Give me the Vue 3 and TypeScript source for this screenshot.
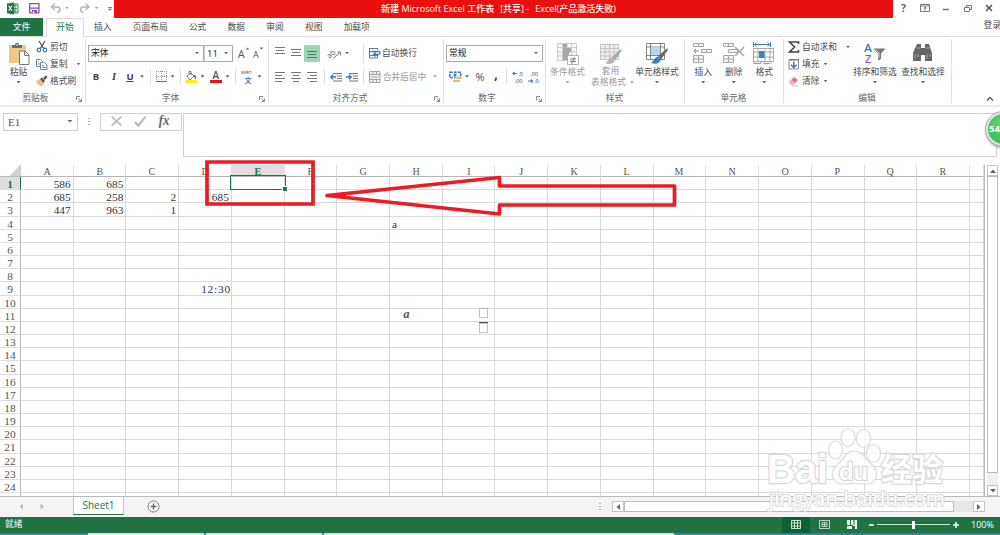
<script setup lang="ts">
const columns: string[] = 'ABCDEFGHIJKLMNOPQR'.split('')
const rows: number[] = Array.from({ length: 25 }, (_, i) => i + 1)

const cells: Record<string, string> = {
  A1: '586', B1: '685',
  A2: '685', B2: '258', C2: '2', D2: '685',
  A3: '447', B3: '963', C3: '1',
  H4: 'a',
  D9: '12:30',
}
const tabs: string[] = ['插入', '页面布局', '公式', '数据', '审阅', '视图', '加载项']
</script>

<template>
  <div class="excel">
    <header class="title">
      <div class="quick">
        <svg width="114" height="18" viewBox="0 0 114 18">
          <path d="M11 4h7v9h-7z" fill="#fff" stroke="#217346" stroke-width=".9" />
          <path d="M13 6h4M13 8.500h4M13 11h4M15 4v9" stroke="#217346" stroke-width=".8" />
          <path d="M7 3.500 14 2.500v12L7 13.300z" fill="#217346" />
          <path d="m8.700 5.800 3.300 5M12 5.800l-3.300 5" stroke="#fff" stroke-width="1.100" />
          <path d="M29.700 3.700h9.200v9.200h-9.200z" fill="#fff" stroke="#8655a8" stroke-width="1.300" />
          <path d="M30 7.500h9v1.300h-9zM32 10h5v3h-5z" fill="#8655a8" />
          <path d="M33 11h1.200v2H33z" fill="#fff" />
          <g fill="none" stroke="#b5b8bd" stroke-width="1.500">
            <path d="M55 3.500 51.500 7 55 10M52 7h5c4 0 4 5 0 5.500" />
            <path d="M85.500 3.500 89 7l-3.500 3M88.500 7h-5c-4 0-4 5 0 5.500" />
          </g>
          <path d="M65 7h4l-2 2zM94.500 7h4l-2 2z" fill="#aaa" />
          <path d="M108 7h4v.8h-4zM108 8.800h4l-2 2z" fill="#666" />
        </svg>
      </div>
      <div class="caption"><span>新建 Microsoft Excel 工作表</span><span>[共享] -</span><span>Excel(产品激活失败)</span></div>
      <svg class="window" width="107" height="18" viewBox="0 0 107 18">
        <text x="8" y="12" font-size="10.500" font-weight="700" fill="#666">?</text>
        <g fill="none" stroke="#777" stroke-width="1">
          <path d="M27.500 4.500h9v7h-9zM27.500 6h9M32 10.500V7M30.500 8.500 32 7l1.500 1.500" />
          <path d="M50 9.500h6" stroke-width="1.500" />
          <path d="M71.500 7.500h5v4h-5zM73.500 7.500v-2h5v4h-2" />
          <path d="m93 5 6 6M99 5l-6 6" stroke="#555" stroke-width="1.500" />
        </g>
      </svg>
    </header>

    <nav class="tabs">
      <span class="file">文件</span>
      <span class="active">开始</span>
      <span v-for="t in tabs" :key="t" class="tab">{{ t }}</span>
      <span class="login">登录</span>
    </nav>

    <section class="ribbon">
      <!-- Clipboard -->
      <div class="group clip">
        <div class="body">
          <div class="big">
            <svg width="22" height="24" viewBox="0 0 22 24">
              <path d="M1 3h17v18H1z" fill="#efc983" />
              <path d="M4 6V3h3c0-3 4-3 4 0h3v3z" fill="#6a6a6a" />
              <path d="M8.300 2.300h1.500v1.200H8.300z" fill="#fff" />
              <path d="M11.500 9h5.500l4 4v9.500h-9.500z" fill="#fff" stroke="#777" />
              <path d="M16.500 9v4.500H21" fill="none" stroke="#777" />
            </svg>
            <span>粘贴</span><i class="arr"></i>
          </div>
          <div class="smalls">
            <div class="small">
              <svg width="12" height="12" viewBox="0 0 12 12">
                <path d="m3 0 5 8M9 0 4 8" stroke="#555" stroke-width="1.300" />
                <g fill="none" stroke="#3b79b8" stroke-width="1.200"><circle cx="3" cy="9" r="1.800" /><circle cx="9" cy="9" r="1.800" /></g>
              </svg>剪切
            </div>
            <div class="small">
              <svg width="12" height="12" viewBox="0 0 12 12">
                <g fill="#fff" stroke="#6b87a8"><path d="M.5 1.500h4l2 2v5h-6z" /><path d="M4.500 4.500h4l2.500 2.500v4.500H4.500z" /></g>
                <path d="M6 7.500h2M6 9.500h4M2 4h1M2 6h2" stroke="#3b79b8" stroke-width=".8" />
              </svg>复制<i class="arr after"></i>
            </div>
            <div class="small">
              <svg width="12" height="12" viewBox="0 0 12 12">
                <path d="m0 6 4-2 4 4-2 3.500c-3-.5-5-2.500-6-5.500z" fill="#efc183" />
                <path d="m4 4 2-1.500L9 6 7.500 8zM7 3l3-2.500 1.500 1.300L9 5z" fill="#555" />
              </svg>格式刷
            </div>
          </div>
        </div>
        <div class="foot">剪贴板</div>
        <svg class="launch" viewBox="0 0 6 6"><path d="M.5 4V.5H4M2.500 2.500 5 5M5.500 2.500v3h-3" /></svg>
      </div>

      <!-- Font -->
      <div class="group font">
        <div class="body rows">
          <div class="row font1">
            <div class="combo">宋体<i class="arr"></i></div>
            <div class="combo size">11<i class="arr"></i></div>
            <svg width="12" height="14" viewBox="0 0 12 14"><text x="0" y="12" font-size="10.500" fill="#555">A</text><path d="m7.500 3.500 2-2 2 2z" fill="#3b79b8" /></svg>
            <svg width="12" height="14" viewBox="0 0 12 14"><text x="0" y="12" font-size="9" fill="#555">A</text><path d="m6.500 1.500 2 2 2-2z" fill="#3b79b8" /></svg>
          </div>
          <div class="row font2">
            <b>B</b><b class="it">I</b><b class="un">U</b><i class="arr"></i><i class="bar"></i>
            <svg width="11" height="11" viewBox="0 0 11 11"><path d="M.5 0v10M5.500 0v10M10.500 0v10M0 .5h11M0 5.500h11" fill="none" stroke="#999" stroke-dasharray="1 1" /><path d="M0 10.500h11" stroke="#666" /></svg>
            <i class="arr"></i><i class="bar"></i>
            <svg width="12" height="12" viewBox="0 0 12 12"><path d="m2 5 4-3 3 3-4 4zM4 3V.5h2V4" fill="#fff" stroke="#777" /><path d="M9 4c2 0 3 2 1.500 4L9 6z" fill="#3b79b8" /><path d="M0 9h12v3H0z" fill="#fff200" /></svg>
            <i class="arr"></i>
            <svg width="12" height="12" viewBox="0 0 12 12"><text x="2.500" y="8.300" font-size="10" font-weight="600" fill="#555">A</text><path d="M0 9h12v3H0z" fill="#f01010" /></svg>
            <i class="arr"></i><i class="bar"></i>
            <svg width="13" height="13" viewBox="0 0 13 13"><text x="0" y="4" font-size="5.500" fill="#555">wén</text><text x="3.500" y="12.500" font-size="7" font-weight="700" fill="#3b79b8">文</text></svg>
            <i class="arr"></i>
          </div>
        </div>
        <div class="foot">字体</div>
        <svg class="launch" viewBox="0 0 6 6"><path d="M.5 4V.5H4M2.500 2.500 5 5M5.500 2.500v3h-3" /></svg>
      </div>

      <!-- Alignment -->
      <div class="group align">
        <div class="body rows">
          <div class="row align1">
            <svg width="10" height="10" viewBox="0 0 10 10"><path d="M0-.5h10M1 2.500h8M0 5.500h10" stroke="#777" /></svg>
            <svg width="10" height="10" viewBox="0 0 10 10"><path d="M0 1.500h10M1 4.500h8M0 7.500h10" stroke="#777" /></svg>
            <span class="on"><svg width="10" height="10" viewBox="0 0 10 10"><path d="M0 3.500h10M1 6.500h8M0 9.500h10" stroke="#567a67" /></svg></span>
            <svg class="turn" width="12" height="12" viewBox="0 0 12 12"><text x="-2" y="9" font-size="7.500" fill="#555" transform="rotate(-42 3 7)">ab</text><path d="m4 11.500 7-6M11.500 8V5H8.500" fill="none" stroke="#777" /></svg>
            <i class="arr"></i><i class="bar wrapbar"></i>
            <svg width="12" height="12" viewBox="0 0 12 12"><path d="M.5 1.500h8M.5 4.500h5M.5 8.500h8M.5 11h8M.5 1v10M8.500 1v2M8.500 8v3" stroke="#777" /><path d="M3 4.500h7c1.500 0 1.500 3-1 3H5M6.500 5.500 4.500 7.500l2 2" fill="none" stroke="#3b79b8" stroke-width="1.300" /></svg>
            <span>自动换行</span>
          </div>
          <div class="row align2">
            <svg width="10" height="10" viewBox="0 0 10 10"><path d="M0 .5h10M0 3.500h7M0 6.500h10M0 9.500h7" stroke="#777" /></svg>
            <svg width="10" height="10" viewBox="0 0 10 10"><path d="M0 .5h10M2 3.500h6M0 6.500h10M2 9.500h6" stroke="#777" /></svg>
            <svg width="10" height="10" viewBox="0 0 10 10"><path d="M0 .5h10M3 3.500h7M0 6.500h10M3 9.500h7" stroke="#777" /></svg>
            <i class="bar"></i>
            <svg width="12" height="10" viewBox="0 0 12 10"><path d="M3 1.500h9M7 4h5M7 6.500h5M3 9h9" stroke="#777" /><path d="M6 5H1M3 2.800.8 5 3 7.200" fill="none" stroke="#3b79b8" stroke-width="1.400" /></svg>
            <svg width="12" height="10" viewBox="0 0 12 10"><path d="M3 1.500h9M7 4h5M7 6.500h5M3 9h9" stroke="#777" /><path d="M0 5h5M3 2.800 5.200 5 3 7.200" fill="none" stroke="#3b79b8" stroke-width="1.400" /></svg>
            <i class="bar"></i>
            <svg width="12" height="12" viewBox="0 0 12 12"><path d="M.5.500h10.500v11H.5zM.5 3.500H11M.5 8.500H11M4 .5v3M7.500.5v3M4 8.500v3M7.500 8.500v3M2 6h7.500" fill="#f4eff4" stroke="#a9a3aa" /></svg>
            <span class="dim">合并后居中</span><i class="arr pale"></i>
          </div>
        </div>
        <div class="foot">对齐方式</div>
        <svg class="launch" viewBox="0 0 6 6"><path d="M.5 4V.5H4M2.500 2.500 5 5M5.500 2.500v3h-3" /></svg>
      </div>

      <!-- Number -->
      <div class="group number">
        <div class="body rows">
          <div class="row"><div class="combo wide">常规<i class="arr"></i></div></div>
          <div class="row num2">
            <svg width="13" height="12" viewBox="0 0 13 12"><path d="M.8 1.300h11v5.200h-11z" fill="#fff" stroke="#3b79b8" stroke-width="1.500" stroke-dasharray="3 1" /><circle cx="6" cy="4" r="1.500" fill="#3b79b8" /><path d="M6 6h6v2H6zM4 9h7v2H4z" fill="#e9bd75" /></svg>
            <i class="arr"></i><b class="pct">%</b><b class="comma">,</b><i class="bar"></i>
            <svg width="13" height="12" viewBox="0 0 13 12"><text x="6" y="4.500" font-size="5.800" fill="#444">.0</text><text x="2.500" y="12" font-size="5.800" fill="#444">.00</text><path d="M5 2.500H1M2.500 1 1 2.500 2.500 4" fill="none" stroke="#3b79b8" stroke-width="1.200" /></svg>
            <svg width="13" height="12" viewBox="0 0 13 12"><text x="2" y="4.500" font-size="5.800" fill="#444">.00</text><text x="6" y="12" font-size="5.800" fill="#444">.0</text><path d="M0 10h4.500M3 8.500 4.500 10 3 11.500" fill="none" stroke="#3b79b8" stroke-width="1.200" /></svg>
          </div>
        </div>
        <div class="foot">数字</div>
        <svg class="launch" viewBox="0 0 6 6"><path d="M.5 4V.5H4M2.500 2.500 5 5M5.500 2.500v3h-3" /></svg>
      </div>

      <!-- Styles -->
      <div class="group styles">
        <div class="body">
          <div class="big dim">
            <svg width="22" height="24" viewBox="0 0 22 24">
              <path d="M.5 1.500h19v17H.5zM.5 5.500h19M.5 10h19M.5 14h19M5.500 1.500v17M10 1.500v17M14.500 1.500v17" fill="#faf7fa" stroke="#d0c9d0" />
              <path d="M6 2h4v3.500H6zM6 6h8v4H6zM6 10h6v4H6zM6 14h4v4H6z" fill="#aaa5aa" />
              <path d="M10.500 13.500h11v9h-11z" fill="#fff" stroke="#b5afb5" /><path d="M13 17h6M13 19.500h6M17.500 15l-3 6.500" stroke="#777" />
            </svg><span>条件格式</span><i class="arr pale"></i>
          </div>
          <div class="big dim two">
            <svg width="22" height="24" viewBox="0 0 22 24">
              <path d="M.5 2.500h18v15H.5zM.5 6.500h18M.5 10h18M.5 14h18M5 2.500v15M9.500 2.500v15M14 2.500v15" fill="#f0ecf0" stroke="#c8c2c8" />
              <path d="M21.500 6.500 12 15l3 3 6.500-9z" fill="#aaa" /><path d="M12 15c-3 0-3 4-7 6 4 2 9 1 10-3z" fill="#b8b4b8" />
            </svg><span>套用</span><span>表格格式<i class="arr pale"></i></span>
          </div>
          <div class="big">
            <svg width="22" height="24" viewBox="0 0 22 24">
              <path d="M.5 1.500h18v16H.5zM.5 5h18M.5 13.500h18M4.500 1.500v16M14.500 1.500v16" fill="#fff" stroke="#777" stroke-width=".9" />
              <path d="M5 5.500h9v7.500H5z" fill="#b8d5ef" />
              <path d="M21.500 6 12 14l3 3.500 6.500-9z" fill="#666" /><path d="M12 14.500c-3 0-3 4-7 6 4 2.500 9 1 10-3z" fill="#3b7fc0" />
            </svg><span>单元格样式</span><i class="arr"></i>
          </div>
        </div>
        <div class="foot">样式</div>
      </div>

      <!-- Cells -->
      <div class="group cellsg">
        <div class="body">
          <div class="big">
            <svg width="22" height="24" viewBox="0 0 22 24">
              <path d="M1.500 1.500h10v3h-10zM6.500 1.500v3M1.500 13.500h10v7h-10zM6.500 13.500v7M1.500 17h10M9.500 7.500h10v3h-10zM14.500 7.500v3" fill="#f5f1f5" stroke="#aaa5aa" />
              <path d="M7 9H2M4 7 2 9l2 2" fill="none" stroke="#888" />
            </svg><span>插入</span><i class="arr"></i>
          </div>
          <div class="big">
            <svg width="22" height="24" viewBox="0 0 22 24">
              <path d="M.5 1.500h10v3H.5zM5.500 1.500v3M.5 13.500h10v7H.5zM5.500 13.500v7M.5 17h10M5.500 7.500h9v3h-9z" fill="#f5f1f5" stroke="#aaa5aa" />
              <path d="m12 5 9 9M21 5l-9 9" stroke="#aaa" stroke-width="1.700" />
            </svg><span>删除</span><i class="arr"></i>
          </div>
          <div class="big">
            <svg width="22" height="24" viewBox="0 0 22 24">
              <path d="M1 2.500h16M3.500.800 1.500 2.500l2 1.700M14.500.8l2 1.700-2 1.700M.5 0v5M17.500 0v5" fill="none" stroke="#3b79b8" />
              <path d="M.5 6.500h20v13H.5zM.5 10h20M.5 15h20M5 6.500v13M12 6.500v13M17 6.500v13" fill="#fff" stroke="#aaa" />
              <path d="M6 9h5.500v7H6z" fill="#3b7fc0" /><path d="M1 19.500v2h7v-2M11 19.500v2h6l2-2" fill="none" stroke="#999" />
            </svg><span>格式</span><i class="arr"></i>
          </div>
        </div>
        <div class="foot">单元格</div>
      </div>

      <!-- Editing -->
      <div class="group edit">
        <div class="body">
          <div class="smalls">
            <div class="small">
              <svg width="12" height="12" viewBox="0 0 12 12"><path d="M10.500 3V1H1.500L6.500 6l-5 5h9V9" fill="none" stroke="#444" stroke-width="1.600" /></svg>自动求和<i class="arr after"></i>
            </div>
            <div class="small">
              <svg width="12" height="12" viewBox="0 0 12 12"><path d="M1 1.500h9.500v9.500H1z" fill="#fff" stroke="#888" /><path d="M1 1h9.500v1.500H1z" fill="#777" /><path d="M5.800 3.500v6M3 6.700l2.800 2.800 2.800-2.800" fill="none" stroke="#3b79b8" stroke-width="1.500" /></svg>填充<i class="arr near"></i>
            </div>
            <div class="small">
              <svg width="12" height="12" viewBox="0 0 12 12"><path d="m1 7 5-5 4 3-5 5H3z" fill="#e8748a" /><path d="m1 7 2-2 4 3-2 2H3z" fill="#f4b6c0" /><path d="M4 11h6" stroke="#bbb" /></svg>清除<i class="arr near"></i>
            </div>
          </div>
          <div class="big">
            <svg width="22" height="24" viewBox="0 0 22 24">
              <text x="0" y="10" font-size="11" font-weight="600" fill="#3b79b8" textLength="8" lengthAdjust="spacingAndGlyphs">A</text>
              <text x="1" y="20.500" font-size="11" font-weight="600" fill="#8e5bb5">Z</text>
              <path d="M9.500 6.500h12l-4.500 5V17l-3 1.500v-7z" fill="#777" /><path d="m12 7.500 3 3.500v5" fill="none" stroke="#ddd" />
            </svg><span>排序和筛选</span><i class="arr"></i>
          </div>
          <div class="big">
            <svg width="22" height="24" viewBox="0 0 22 24">
              <path d="M5 2h4v4h4V2h4l3 9v8h-7v-6H9v6H1v-8z" fill="#666" /><path d="M4.500 6h4M13.500 6h4M3 12v5M15 12v5M6 12v3M18 12v3" stroke="#bbb" stroke-width=".8" />
            </svg><span>查找和选择</span><i class="arr"></i>
          </div>
        </div>
        <div class="foot">编辑</div>
      </div>
      <svg class="collapse" width="8" height="6" viewBox="0 0 8 6"><path d="m1 4.500 3-3 3 3" fill="none" stroke="#555" stroke-width="1.300" /></svg>
    </section>

    <section class="formula">
      <div class="name">E1<i class="arr"></i></div>
      <i class="dots"></i>
      <svg class="fx" width="82" height="18" viewBox="0 0 82 18">
        <path d="m8 3 11 10M19 3 8 13" stroke="#b9b9b9" stroke-width="1.800" />
        <path d="m34 9 4 4 8-10" fill="none" stroke="#bdbdbd" stroke-width="2.500" />
        <text x="61" y="12.500" font-size="17" font-family="Liberation Serif, serif" font-style="italic" font-weight="700" fill="#666" textLength="12" lengthAdjust="spacingAndGlyphs">fx</text>
      </svg>
      <div class="input"></div>
    </section>

    <main class="sheet">
      <div class="grid">
        <div class="corner"></div>
        <div v-for="c in columns" :key="c" class="ch" :class="{ sel: c === 'E' }"><span>{{ c }}</span></div>
        <div class="ch"></div>
        <template v-for="r in rows" :key="r">
          <div class="rh" :class="{ sel: r === 1 }">{{ r < 25 ? r : '' }}</div>
          <div v-for="c in columns" :key="c + r" class="cell" :class="{ left: c === 'H', time: r === 9 }">
            {{ cells[c + r] }}<i v-if="c === 'E' && r === 1" class="cursor"></i>
          </div>
          <div class="cell"></div>
        </template>
      </div>
      <div class="vscroll">
        <span class="btn"><svg width="6" height="4" viewBox="0 0 6 4"><path d="m0 4 3-3.500L6 4z" /></svg></span>
        <span class="thumb"></span>
        <span class="btn"><svg width="6" height="4" viewBox="0 0 6 4"><path d="m0 0 3 3.500L6 0z" /></svg></span>
      </div>
    </main>

    <section class="sheets">
      <svg class="navs" width="73" height="20" viewBox="0 0 73 20"><path d="m23 6.500-3.500 3 3.500 3zM40.500 6.500l3.500 3-3.500 3z" fill="#bbb" /></svg>
      <span class="sheettab">Sheet1</span>
      <svg class="add" width="13" height="13" viewBox="0 0 13 13"><circle cx="6.500" cy="6.500" r="5.500" fill="#fff" stroke="#777" /><path d="M6.500 3.500v6M3.500 6.500h6" stroke="#666" stroke-width="1.400" /></svg>
      <i class="dots"></i>
      <div class="hscroll">
        <span class="btn"><svg width="4" height="6" viewBox="0 0 4 6"><path d="M4 0 .5 3 4 6z" /></svg></span>
        <span class="thumb"></span>
        <span class="btn"><svg width="4" height="6" viewBox="0 0 4 6"><path d="m0 0 3.500 3L0 6z" /></svg></span>
      </div>
    </section>

    <footer class="status">
      <span class="ready">就绪</span>
      <svg class="views" width="188" height="16" viewBox="0 0 188 16">
        <path d="M0 0h28v16H0z" fill="#0a6332" />
        <path d="M9.500 3.500h9v8h-9zM9.500 6h9M9.500 9h9M12.500 3.500v8M15.500 3.500v8" fill="none" stroke="#dcefe3" stroke-width=".9" />
        <path d="M37.500 3.500h10v8h-10zM40 5.500h5v4h-5zM40 7.500h5M42.500 5.500v4" fill="none" stroke="#b8d6c4" />
        <path d="M65 3h10v9H65z" fill="#e4f1e9" /><path d="M68.500 3v5M72 3v5M65 8.500h6" stroke="#217346" /><path d="M70 9h3v3h-3z" fill="#217346" />
        <path d="M87 8h5M171 8h6M174 5v6" stroke="#fff" stroke-width="1.500" />
        <path d="M95 7.500h73" stroke="#c9e0d2" stroke-width="1" /><path d="M130 4h3v8h-3z" fill="#fff" />
      </svg>
      <span class="zoom">100%</span>
    </footer>
    <div class="taskbar"><i></i><i></i><i></i></div>

    <!-- Drawn shapes and text boxes floating over the sheet -->
    <svg class="overlay" width="1000" height="535" viewBox="0 0 1000 535">
      <text x="403.500" y="318" font-size="12" font-family="Liberation Serif, serif" font-style="italic" font-weight="700" fill="#555">a</text>
      <g fill="#fff" stroke="#777" stroke-width=".9" stroke-dasharray="1 1">
        <path d="M479.500 308.500h8v9h-8zM479.500 323.500h8v9h-8z" />
      </g>
      <path d="M479 322.500h9" stroke="#555" />
      <g fill="none" stroke="#ed1c24" stroke-width="3.700">
        <path d="M207 162h106v42H207z" />
        <path d="M327 195.500 499.500 177.500V186h175v19h-175v9z" stroke-linejoin="round" />
        <path d="m327 195.500 18-2.500v5z" fill="#ed1c24" stroke-width="1.500" />
      </g>
      <g class="mark">
        <ellipse cx="835.500" cy="450" rx="7" ry="9" /><ellipse cx="848" cy="437.500" rx="7" ry="9" /><ellipse cx="863.500" cy="438.500" rx="7" ry="9" /><ellipse cx="873.500" cy="453.500" rx="7" ry="9" />
        <path d="M854 451c-8 0-10 8-16 13-10 8-6 21 6 20 7-1 13-1 20 0 13 1 17-12 7-20-6-5-9-13-17-13z" />
        <text x="767" y="483" font-size="40" font-weight="700" textLength="61" lengthAdjust="spacingAndGlyphs">Bai</text>
        <text x="839" y="480" font-size="24" font-weight="700" textLength="29" lengthAdjust="spacingAndGlyphs">du</text>
        <text x="881" y="481" font-size="32" font-weight="700" textLength="62" lengthAdjust="spacingAndGlyphs">经验</text>
        <text class="url" x="769" y="506" font-size="20" textLength="176" lengthAdjust="spacingAndGlyphs">jingyan.baidu.com</text>
      </g>
    </svg>
    <div class="badge">54</div>
  </div>
</template>

<style>
body { overflow: hidden; }
</style>

<style scoped>
.excel {
  position: relative; width: 1000px; height: 535px; overflow: hidden; background: #fff;
  display: flex; flex-direction: column; color: #4a4a4a; font-style: normal; white-space: nowrap;
  font-family: "Open Sans", "Noto Sans CJK SC", sans-serif; font-size: 8.75px; line-height: 12px;
}
.excel * { box-sizing: border-box; }
svg { display: block; flex: none; overflow: visible; }
i { font-style: normal; }
.arr { display: block; width: 4px; height: 2.5px; background: #666; clip-path: polygon(0 0, 100% 0, 50% 100%); }
.arr.pale { background: #aaa; }

.title { display: grid; grid-template-columns: 114px 779px 107px; height: 18px; }
.caption {
  background: #ea1010; color: #fff; display: flex; justify-content: center; gap: 6px;
  padding-right: 10px; line-height: 17px; font-weight: 500; font-size: 9px;
}

.tabs { display: flex; height: 19px; border-bottom: 1px solid #ddd; line-height: 18px; position: relative; }
.file { width: 43px; background: #217346; color: #fff; text-align: center; }
.active {
  width: 38px; height: 19px; margin: 0 10px 0 3px; text-align: center; color: #217346;
  border: 1px solid #ddd; border-bottom: 0; background: #fff; line-height: 17px;
}
.tab { margin-right: 21.2px; }
.login { margin-left: auto; margin-right: -1px; line-height: 14px; }

.ribbon { display: flex; height: 70px; padding-top: 2px; border-bottom: 2px solid #ececec; position: relative; }
.group { position: relative; height: 64px; border-right: 1px solid #e0e0e0; }
.clip { width: 86px; } .font { width: 183px; } .align { width: 175px; } .number { width: 102px; }
.styles { width: 139px; } .cellsg { width: 99px; } .edit { width: 168px; }
.body { display: flex; height: 53px; }
.foot { text-align: center; line-height: 12px; color: #666; padding-right: 14px; }
.font .foot { padding-right: 13px; } .align .foot { padding-right: 12px; } .number .foot { padding-right: 15px; }
.styles .foot { padding-right: 1px; } .cellsg .foot { padding-right: 1px; } .edit .foot { padding-right: 1px; }
.launch { position: absolute; right: 3px; bottom: 1px; width: 6px; height: 6px; fill: none; stroke: #777; stroke-width: .9; }
.big { display: flex; flex-direction: column; align-items: center; padding-top: 3px; flex: none; }
.big span { line-height: 12px; }
.big .arr { margin-top: 3px; }
.clip .big { width: 37px; }
.dim { color: #999; }
.two span { line-height: 11px; display: flex; align-items: center; }
.two span:last-child { padding-left: 4px; }
.two .arr { margin: 0 0 0 4px; }
.smalls { display: flex; flex-direction: column; margin-top: -.5px; }
.small { display: flex; align-items: center; height: 17px; gap: 2px; }
.clip .small svg { margin-left: -1px; }
.after { margin-left: 7px; } .near { margin-left: 2px; }
.rows { flex-direction: column; }
.row { display: grid; align-items: center; height: 23px; justify-items: center; }
.rows .row:first-child { height: 26px; padding-top: 2px; }
.bar { width: 1px; height: 15px; background: #ddd; }
.combo {
  width: 100%; height: 17px; border: 1px solid #ababab; display: flex; align-items: center;
  justify-content: space-between; padding: 0 4px 0 2px; color: #222; line-height: 15px; justify-self: start;
}
.size { border-left-color: #ccc; font-size: 9.5px; }
.font1 { grid-template-columns: 116px 29px 3px 15px 16px; padding-left: 2px; }
.font1 svg:nth-of-type(1) { grid-column: 4; }
.font2 { grid-template-columns: 20px 16px 16px 8px 8px 14px 9px 7px 14px 9px 17px 7px 9px 15px 9px; }
.font2 b { font-size: 9.5px; color: #444; }
.font2 .it { font-family: "Liberation Serif", serif; font-style: italic; font-size: 10.5px; }
.font2 .un { text-decoration: underline; }
.align1 { grid-template-columns: 16px 16px 16px 24px 6px 17px 15px auto; padding-left: 3px; justify-content: start; }
.align1 span:last-child { justify-self: start; }
.turn { margin-left: 5px; } .wrapbar { margin-left: 9px; height: 19px; }
.on { width: 16px; height: 17px; background: #9fd5b7; display: grid; place-items: center; }
.align2 { grid-template-columns: 16px 16px 16px 8px 16px 16px 7px 15px 45px 16px; padding-left: 3px; justify-content: start; }
.number .rows { padding-left: 2px; }
.wide { width: 97px; }
.num2 { grid-template-columns: 18px 6px 20px 12px 9px 15px 17px; justify-content: start; }
.pct { font-size: 11px; font-weight: 400; } .comma { font-size: 14px; line-height: 8px; padding-bottom: 6px; }
.styles .big { width: 43px; } .styles .two { width: 43px; } .styles .big:last-child { width: 50px; }
.cellsg .body { padding-left: 3px; }
.cellsg .big { width: 30.5px; }
.edit .smalls { width: 67px; padding-left: 4px; }
.edit .big { width: 48px; }
.collapse { margin: 57px 0 0 34px; }

.formula { display: flex; height: 58px; padding: 6px 3px 0 3px; align-items: flex-start; flex: none; }
.name {
  width: 75px; height: 18px; border: 1px solid #ccc; display: flex; align-items: center; justify-content: space-between;
  padding: 0 4px; font-family: "Liberation Serif", serif; font-size: 11px; color: #555;
}
.name .arr { width: 6px; height: 3px; margin-bottom: 2px; }
.dots { width: 2px; height: 8px; background: repeating-linear-gradient(#aaa 0 1px, transparent 1px 3px); }
.formula .dots { margin: 5px 10px 0; }
.fx { border: 1px solid #d0d0d0; }
.input { margin-left: 1px; flex: 1; height: 44px; border: 1px solid #d0d0d0; }

.sheet { display: flex; height: 332px; flex: none; border-bottom: 1px solid #bbb; }
.grid {
  display: grid; width: 985px; height: 331px; overflow: hidden; border-right: 1px solid #bbb;
  grid-template-columns: 21px repeat(18, 52.72px) 1fr; grid-template-rows: 12px repeat(25, 13.18px);
  font-family: "Liberation Serif", serif; font-size: 11.4px; line-height: 13px; color: #333;
}
.corner { border-bottom: 1px solid #bbb; border-right: 1px solid #ccc; background: linear-gradient(135deg, #fff 64%, #d0d0d0 66%); }
.ch { text-align: center; border-right: 1px solid #ddd; border-bottom: 1px solid #b5b5b5; line-height: 12px; color: #555; }
.ch span { display: inline-block; transform: scaleX(.88); }
.rh { border-right: 1px solid #bbb; border-bottom: 1px solid #ddd; text-align: center; color: #555; line-height: 15px; }
.ch.sel { background: #dedede; color: #217346; font-weight: 700; }
.rh.sel { background: #dedede; color: #217346; font-weight: 700; border-right: 1px solid #217346; }
.cell { position: relative; text-align: right; border-right: 1px solid #d9d9d9; border-bottom: 1px solid #d9d9d9; padding-right: 2px; line-height: 15px; }
.left { text-align: left; padding-left: 2px; }
.time { letter-spacing: .75px; padding-right: 0; }
.cursor { position: absolute; inset: -2px -2px -1px -2px; border: 1.6px solid #217346; z-index: 1; }
.cursor::after { content: ""; position: absolute; right: -2px; bottom: -2px; width: 4px; height: 4px; background: #217346; outline: 1px solid #fff; }
.vscroll { width: 11px; margin-left: 2px; display: flex; flex-direction: column; background: #f0f0f0; }
.btn { display: grid; place-items: center; background: #fff; border: 1px solid #c4c4c4; fill: #666; }
.vscroll .btn { height: 11px; }
.thumb { background: #fff; border: 1px solid #bbb; }
.vscroll .thumb { height: 297px; margin-bottom: auto; }

.sheets { display: flex; height: 20px; background: #f4f4f4; flex: none; }
.sheettab {
  width: 51px; height: 18px; background: #fff; color: #217346; font-size: 10px; line-height: 17px; text-align: center;
  border: 1px solid #c4c4c4; border-top: 0; border-bottom: 1.500px solid #217346;
}
.add { margin: 3px 0 0 23px; }
.sheets .dots { margin: 6px 0 0 439px; }
.hscroll { margin: 4px 0 0 11px; width: 373px; height: 11px; display: flex; background: #e8e8e8; }
.hscroll .btn { width: 12px; }
.hscroll .thumb { width: 330px; margin-right: auto; }

.status { display: flex; height: 16px; background: #217346; color: #fff; flex: none; line-height: 15px; }
.ready { margin-left: 5px; }
.views { margin-left: auto; }
.zoom { width: 30px; font-size: 9px; padding-left: 1px; }
.taskbar { display: flex; gap: 2px; height: 2px; background: #3b7fa5; padding-left: 88px; }
.taskbar i { width: 116px; background: #d8e6ea; }
.taskbar i:last-child { width: 350px; }

.overlay { position: absolute; left: 0; top: 0; pointer-events: none; }
.mark { fill: rgba(255, 255, 255, .75); stroke: #dcdcdc; stroke-width: 1.2; }
.mark text { fill: #fff; stroke: #d8d8d8; stroke-width: 2.4; paint-order: stroke; stroke-linejoin: round; font-family: "Liberation Sans", "Noto Sans CJK SC", sans-serif; }
.mark .url { stroke-width: 1.8; font-family: "Open Sans", sans-serif; }
.badge {
  position: absolute; left: 986px; top: 112px; width: 34px; height: 34px; border-radius: 50%;
  border: 2px solid #e3e3e3; outline: 1px solid #aaa; background: radial-gradient(circle at 50% 30%, #62d673, #2fb950);
  color: #fff; font-weight: 700; font-size: 9.500px; line-height: 29px; padding-left: 1px; box-shadow: 0 2px 3px #999;
}
</style>
